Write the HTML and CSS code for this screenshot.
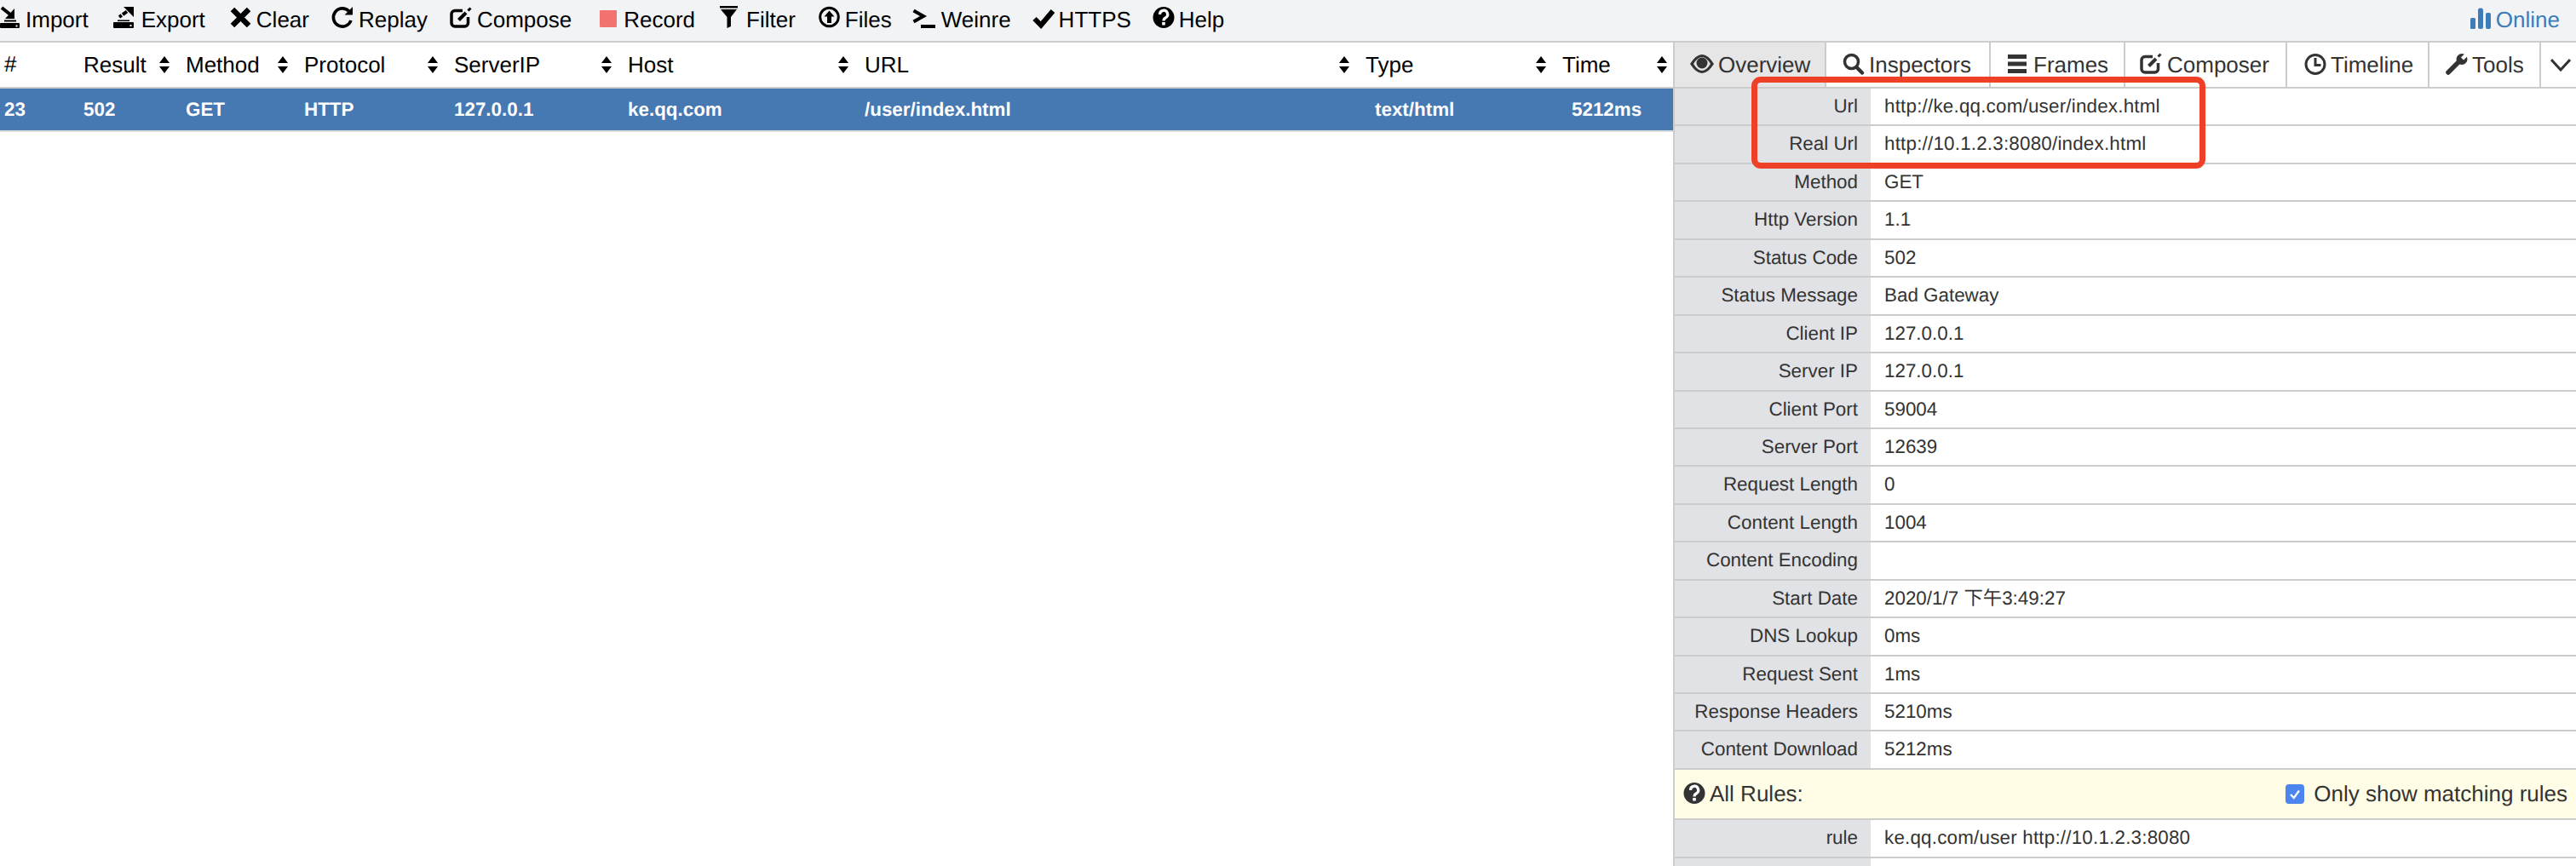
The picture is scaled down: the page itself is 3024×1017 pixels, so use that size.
FILE: index.html
```html
<!DOCTYPE html>
<html lang="en">
<head>
<meta charset="utf-8">
<title>Whistle Network</title>
<link rel="stylesheet" href="styles.css">
</head>
<body>
<div class="app">
  <header class="toolbar">
    <a class="tool"><svg class="ico" width="24" height="28" viewBox="0 7 24 28"><path d="M2 9 L12 17" class="ln" stroke-width="4"/><path d="M17 10 V22 H6Z"/><rect x="5" y="23.5" width="14" height="2"/><rect x="0" y="27" width="23" height="6" rx="1"/><rect x="18.5" y="29.5" width="2" height="2" class="hole"/></svg>Import</a>
    <a class="tool"><svg class="ico" width="30" height="28" viewBox="-3 7 30 28"><path d="M7 20 L16 13.5" class="ln" stroke-width="4" stroke-dasharray="3.5 1.5 8"/><path d="M12 8 H24 V20Z"/><rect x="5" y="23.5" width="14" height="1.5"/><rect x="0" y="26" width="24" height="7" rx="1"/><rect x="19.5" y="29" width="2" height="2" class="hole"/></svg>Export</a>
    <a class="tool"><svg class="ico" width="28" height="28" viewBox="-4 7 28 28"><path d="M4.2 13.2 L18.8 27.8 M18.8 13.2 L4.2 27.8" class="ln sq" stroke-width="6.4"/></svg>Clear</a>
    <a class="tool"><svg class="ico" width="26" height="28" viewBox="0 7 26 28"><path d="M20.5 13 A10.6 10.6 0 1 0 23 24" class="ln" stroke-width="3.6"/><path d="M25 8 V17.5 H15.5Z"/></svg>Replay</a>
    <a class="tool"><svg class="ico" width="26" height="28" viewBox="0 7 26 28"><path d="M15 12.5 H6 A4 4 0 0 0 2 16.5 V27 A4 4 0 0 0 6 31 H17.5 A4 4 0 0 0 21.5 27 V20" class="ln" stroke-width="3.5"/><path d="M10.5 23.5 L19 15" class="ln" stroke-width="4"/><path d="M21.5 12.5 L24.5 9.5" class="ln" stroke-width="3"/></svg>Compose</a>
    <a class="tool"><svg class="ico" width="29" height="28" viewBox="-7 7 29 28"><rect x="0" y="12" width="20" height="20" rx="1" class="rec"/></svg>Record</a>
    <a class="tool"><svg class="ico" width="28" height="28" viewBox="-3 7 28 28"><rect x="0" y="7" width="21" height="2.5"/><path d="M1 11 H20 L13 20 V31 L8.5 33 V20Z"/></svg>Filter</a>
    <a class="tool"><svg class="ico" width="26" height="28" viewBox="-1 7 26 28"><circle cx="12.5" cy="20" r="10.8" class="ln" stroke-width="3"/><path d="M12.5 12.5 L18.5 19.5 H15 V27 H10 V19.5 H6.5Z"/></svg>Files</a>
    <a class="tool"><svg class="ico" width="26" height="28" viewBox="2 7 26 28"><path d="M1.5 12.5 L13 19 L1.5 25.5" class="ln" stroke-width="4"/><rect x="10" y="29" width="17" height="4"/></svg>Weinre</a>
    <a class="tool"><svg class="ico" width="24" height="28" viewBox="1 7 24 28"><path d="M2.5 22 L10 29.5 L24 13" class="ln" stroke-width="6"/></svg>HTTPS</a>
    <a class="tool"><svg class="ico" width="24" height="28" viewBox="1 7 24 28"><circle cx="13" cy="20.5" r="12.5"/><path d="M8.5 17 A4.6 4.6 0 1 1 15.5 20.8 Q13 22 13 24.5" class="ln white" stroke-width="3.2"/><rect x="11.2" y="26" width="3.6" height="3.5" class="whitefill"/></svg>Help</a>
    <a class="tool tool-online"><svg class="ico" width="24" height="28" viewBox="0 7 24 28"><rect x="0" y="21" width="6" height="13" rx="1.5"/><rect x="9" y="9.5" width="6" height="24.5" rx="2.5"/><rect x="18" y="15" width="6" height="19" rx="2"/></svg>Online</a>
  </header>

  <main class="main">
    <section class="list">
      <div class="cols list-head">
        <div class="cell">#</div>
        <div class="cell cell-sort">Result<i class="sort"></i></div>
        <div class="cell cell-sort">Method<i class="sort"></i></div>
        <div class="cell cell-sort">Protocol<i class="sort"></i></div>
        <div class="cell cell-sort">ServerIP<i class="sort"></i></div>
        <div class="cell cell-sort">Host<i class="sort"></i></div>
        <div class="cell cell-sort">URL<i class="sort"></i></div>
        <div class="cell cell-sort">Type<i class="sort"></i></div>
        <div class="cell cell-sort cell-last">Time<i class="sort"></i></div>
      </div>
      <div class="cols list-row">
        <div class="cell">23</div>
        <div class="cell">502</div>
        <div class="cell">GET</div>
        <div class="cell">HTTP</div>
        <div class="cell">127.0.0.1</div>
        <div class="cell">ke.qq.com</div>
        <div class="cell">/user/index.html</div>
        <div class="cell cell-inset">text/html</div>
        <div class="cell cell-inset">5212ms</div>
      </div>
    </section>

    <aside class="detail">
      <nav class="tabs">
        <a class="tab tab-on"><svg class="ico" width="28" height="28" viewBox="0 62 28 28"><path d="M0 75 Q14 53 28 75 Q14 97 0 75Z"/><path d="M4 75 Q14 59 24 75 Q14 91 4 75Z" class="tabhole"/><circle cx="14" cy="74" r="6.5"/></svg>Overview</a>
        <a class="tab"><svg class="ico" width="27" height="28" viewBox="-1 62 27 28"><circle cx="10.5" cy="72.5" r="8" class="ln" stroke-width="3.5"/><path d="M16.5 79 L23 85.5" class="ln rnd" stroke-width="4.5"/></svg>Inspectors</a>
        <a class="tab"><svg class="ico" width="27" height="28" viewBox="-2 62 27 28"><rect x="0" y="64" width="22" height="5"/><rect x="0" y="72.5" width="22" height="5"/><rect x="0" y="81" width="22" height="5"/></svg>Frames</a>
        <a class="tab"><svg class="ico" width="26" height="28" viewBox="1 62 26 28"><g transform="translate(0 54)"><path d="M15 12.5 H6 A4 4 0 0 0 2 16.5 V27 A4 4 0 0 0 6 31 H17.5 A4 4 0 0 0 21.5 27 V20" class="ln" stroke-width="3.5"/><path d="M10.5 23.5 L19 15" class="ln" stroke-width="4"/><path d="M21.5 12.5 L24.5 9.5" class="ln" stroke-width="3"/></g></svg>Composer</a>
        <a class="tab"><svg class="ico" width="28" height="28" viewBox="-2 62 28 28"><circle cx="13" cy="75.5" r="11" class="ln" stroke-width="3"/><path d="M13 68 V76.5 H19.5" class="ln" stroke-width="3"/></svg>Timeline</a>
        <a class="tab"><svg class="ico" width="27" height="28" viewBox="-1 62 27 28"><path d="M3 85 L16 72" class="ln rnd" stroke-width="5.5"/><circle cx="19" cy="69.5" r="6.5"/><path d="M19.5 69 L27 61.5" class="ln whiteln" stroke-width="4.5"/></svg>Tools</a>
        <a class="tab tab-more"><svg width="24" height="28" viewBox="0 62 24 28"><path d="M1 70 L12 82 L23 70" class="ln" stroke-width="3"/></svg></a>
      </nav>
      <div class="kv"><div class="k">Url</div><div class="v v-url">http://ke.qq.com/user/index.html</div></div>
      <div class="kv"><div class="k">Real Url</div><div class="v v-url">http://10.1.2.3:8080/index.html</div></div>
      <div class="kv"><div class="k">Method</div><div class="v">GET</div></div>
      <div class="kv"><div class="k">Http Version</div><div class="v">1.1</div></div>
      <div class="kv"><div class="k">Status Code</div><div class="v">502</div></div>
      <div class="kv"><div class="k">Status Message</div><div class="v">Bad Gateway</div></div>
      <div class="kv"><div class="k">Client IP</div><div class="v">127.0.0.1</div></div>
      <div class="kv"><div class="k">Server IP</div><div class="v">127.0.0.1</div></div>
      <div class="kv"><div class="k">Client Port</div><div class="v">59004</div></div>
      <div class="kv"><div class="k">Server Port</div><div class="v">12639</div></div>
      <div class="kv"><div class="k">Request Length</div><div class="v">0</div></div>
      <div class="kv"><div class="k">Content Length</div><div class="v">1004</div></div>
      <div class="kv"><div class="k">Content Encoding</div><div class="v"></div></div>
      <div class="kv"><div class="k">Start Date</div><div class="v">2020/1/7 下午3:49:27</div></div>
      <div class="kv"><div class="k">DNS Lookup</div><div class="v">0ms</div></div>
      <div class="kv"><div class="k">Request Sent</div><div class="v">1ms</div></div>
      <div class="kv"><div class="k">Response Headers</div><div class="v">5210ms</div></div>
      <div class="kv"><div class="k">Content Download</div><div class="v">5212ms</div></div>
      <div class="rules">
        <svg class="ico" width="26" height="28" viewBox="0 7 26 28"><circle cx="13" cy="20.5" r="12.5"/><path d="M8.5 17 A4.6 4.6 0 1 1 15.5 20.8 Q13 22 13 24.5" class="ln white" stroke-width="3.2"/><rect x="11.2" y="26" width="3.6" height="3.5" class="whitefill"/></svg>
        <span class="rules-title">All Rules:</span>
        <label class="only"><svg width="22" height="23" viewBox="0 0 22 23"><rect width="22" height="23" rx="4" class="check"/><path d="M6 12 L9.8 16 L16 7.5" class="ln white" stroke-width="2.2"/></svg>Only show matching rules</label>
      </div>
      <div class="kv kv-rule"><div class="k">rule</div><div class="v v-url">ke.qq.com/user http://10.1.2.3:8080</div></div>
      <div class="kv"><div class="k"></div><div class="v"></div></div>
    </aside>
  </main>

  <div class="callout"></div>
</div>
</body>
</html>
```
FILE: styles.css
```css
* { box-sizing: border-box; }
html, body { margin: 0; padding: 0; height: 100%; background: #fff; }
body { overflow: hidden; font-family: "Liberation Sans", Arial, "Noto Sans CJK SC", sans-serif; color: #000; text-rendering: geometricPrecision; }
.app { position: relative; height: 1017px; overflow: hidden; }

.toolbar { display: flex; gap: 26px; height: 50px; background: #f2f3f5; border-bottom: 2px solid #ccc; font-size: 26px; line-height: 46px; }
.tool { display: flex; align-items: center; height: 48px; padding-bottom: 2px; white-space: nowrap; color: #000; }
.tool .ico { margin-right: 6px; margin-bottom: 4px; fill: #000; stroke: none; flex: none; overflow: visible; }
.tool-online { margin-left: auto; padding-right: 19px; color: #3d7cb9; }
.tool-online .ico { fill: #3d7cb9; }

.ln { fill: none; stroke: currentColor; stroke-linecap: butt; stroke-linejoin: miter; }
.sq { stroke-linecap: square; }
.rnd { stroke-linecap: round; }
.white { stroke: #fff; }
.whitefill { fill: #fff; }
.whiteln { stroke: #fff; }
.hole { fill: #f2f3f5; }
.rec { fill: #f2726f; }
.check { fill: #4c85ee; }

.main { display: flex; height: 967px; }
.list { width: 1966px; flex: none; border-right: 2px solid #ccc; }
.cols { display: grid; grid-template-columns: 93px 120px 139px 176px 204px 278px 588px 231px 135px; }
.list-head { height: 54px; border-bottom: 2px solid #ccc; font-size: 26px; line-height: 50px; color: #000; }
.cell { padding-left: 5px; white-space: nowrap; }
.cell-sort { display: flex; justify-content: space-between; align-items: center; padding-right: 13px; }
.cell-last { padding-right: 6px; }
.sort { display: block; flex: none; width: 13px; height: 20px; position: relative; }
.sort::before, .sort::after { content: ""; position: absolute; left: 0; border-left: 6.5px solid transparent; border-right: 6.5px solid transparent; }
.sort::before { top: 0; border-bottom: 8px solid #000; }
.sort::after { bottom: 0; border-top: 8px solid #000; }

.list-row { height: 51px; background: #4678b2; border-bottom: 2px solid #ddd; background-clip: padding-box; color: #fff; font-size: 22.4px; font-weight: bold; line-height: 49px; }
.cell-inset { padding-left: 16px; }

.detail { flex: 1; min-width: 0; color: #333; font-size: 22.4px; }
.tabs { display: grid; grid-template-columns: 178px 193px 158px 190px 167px 131px 1fr; height: 54px; border-bottom: 2px solid #ccc; font-size: 26px; }
.tab { display: flex; align-items: center; padding-left: 18px; border-right: 2px solid #ccc; white-space: nowrap; color: #333; }
.tab .ico { margin-right: 5px; fill: #333; flex: none; overflow: visible; }
.tab-on { background: #e6e6e6; }
.tabhole { fill: #e6e6e6; }
.tab-more { border-right: 0; padding-left: 11px; }

.kv { display: grid; grid-template-columns: 230px 1fr; height: 44.44px; border-bottom: 2px solid #ccc; line-height: 41px; }
.kv-rule { height: 45px; }
.k { background: #e1e2e6; text-align: right; padding-right: 15px; }
.v { padding-left: 16px; white-space: nowrap; }
.v-url { letter-spacing: 0.2px; }

.rules { display: flex; align-items: center; height: 59px; background: #fffde6; border-bottom: 2px solid #ccc; font-size: 26px; padding: 0 10px; }
.rules .ico { fill: #333; margin-right: 5px; flex: none; }
.only { margin-left: auto; display: flex; align-items: center; }
.only svg { margin-right: 11px; }

.callout { position: absolute; left: 2056px; top: 90px; width: 533px; height: 108px; border: 7px solid #ee4026; border-radius: 11px; }
```
